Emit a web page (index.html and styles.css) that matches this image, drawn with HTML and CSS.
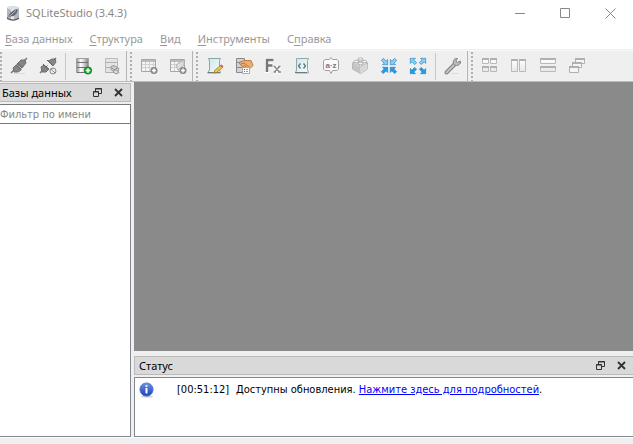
FILE: index.html
```html
<!DOCTYPE html>
<html lang="ru">
<head>
<meta charset="utf-8">
<title>SQLiteStudio (3.4.3)</title>
<link rel="stylesheet" href="styles.css">
</head>
<body>
<svg class="defs" aria-hidden="true">
  <defs>
    <linearGradient id="metal" x1="0" x2="1" y1="0" y2="0"><stop offset="0" stop-color="#8c8c8c"/><stop offset=".35" stop-color="#fff"/><stop offset=".6" stop-color="#d4d5e2"/><stop offset="1" stop-color="#808080"/></linearGradient>
    <linearGradient id="paper" x1="0" x2="1" y1="0" y2="1"><stop offset="0" stop-color="#cfe6e8"/><stop offset="1" stop-color="#f6fcfc"/></linearGradient>
    <linearGradient id="pane" x1="0" x2="0" y1="0" y2="1"><stop offset="0" stop-color="#fff"/><stop offset="1" stop-color="#e6e6e6"/></linearGradient>
    <linearGradient id="info" x1="0" x2="0" y1="0" y2="1"><stop offset="0" stop-color="#6f93e8"/><stop offset="1" stop-color="#1a3fb4"/></linearGradient>
    <symbol id="arrow" viewBox="0 0 8 8"><path d="M7.300 7.300V2L5.600 3.700 2.800.9.900 2.800 3.700 5.600 2 7.300Z" stroke="#2183bf" stroke-width=".7"/></symbol>
    <symbol id="restore" viewBox="0 0 9 9"><path d="M2.500 3V.5h6v5H6M2 1h7M.5 3.500h5v5h-5zM0 4h6" fill="none" stroke="#333"/></symbol>
    <symbol id="close" viewBox="0 0 9 9"><path d="M1 1l7 7M8 1L1 8" fill="none" stroke="#333" stroke-width="1.800"/></symbol>
  </defs>
</svg>
<div class="window">
  <header class="titlebar">
    <svg class="app-icon" viewBox="0 0 14 16"><path d="M1 3v10q6 4.500 12 0V3Q7-1 1 3Z" fill="#b4b6be"/><path d="M5 3h3v12H5z" fill="#e6e8ef"/><ellipse cx="7" cy="2.800" rx="6" ry="1.800" fill="#dcdfe8"/><path d="M1 12.500q6 4 12 0v1.500q-6 3.500-12 0z" fill="#555"/><path d="M1 13C4 9 4 6 11.500 4c.5 4-3 7.500-7 7.500z" fill="#626670"/><path d="M2 12.500L10 5.500" stroke="#ddd" stroke-width=".7"/></svg>
    <h1 class="app-name">SQLiteStudio (3.4.3)</h1>
    <div class="window-buttons">
      <button class="window-button" aria-label="Свернуть"><svg viewBox="0 0 11 11"><path d="M0 5.500h10"/></svg></button>
      <button class="window-button" aria-label="Развернуть"><svg viewBox="0 0 11 11"><path d="M.5.5h9v9h-9z"/></svg></button>
      <button class="window-button" aria-label="Закрыть"><svg viewBox="0 0 11 11"><path d="M.5.5l10 10M10.500.5l-10 10"/></svg></button>
    </div>
  </header>
  <nav class="menubar">
    <button class="menu"><u>Б</u>аза данных</button>
    <button class="menu"><u>С</u>труктура</button>
    <button class="menu"><u>В</u>ид</button>
    <button class="menu"><u>И</u>нструменты</button>
    <button class="menu">С<u>п</u>равка</button>
  </nav>
  <div class="toolbars">
    <div class="toolbar toolbar-first">
      <button class="tool" aria-label="Подключить"><svg viewBox="0 0 20 20"><path d="M4 17.500h12" stroke="#ddd"/><path d="M2 17l4-4M14 6l4-4" stroke="#777" stroke-width="1.500"/><path d="M4 12l3-3 5 5-3 2-4 0zM8 8l4-4 4 0 1 3-4 5z" fill="#858585" stroke="#707070"/><path d="M7 8.500l5.500 5M8.500 7l5 5" stroke="#606060"/></svg></button>
      <button class="tool" aria-label="Отключить"><svg viewBox="0 0 20 20"><path d="M2 17l3-3M15 5l3-3" stroke="#777" stroke-width="1.500"/><path d="M3 11l3-2 5 4-3 3-4 0zM10 5l4-2 3 0 1 3-3 4z" fill="#858585" stroke="#707070"/><path d="M5 8l6 6M9 4l6 6M8 11l1.500-1.500" stroke="#606060"/><circle cx="15" cy="15" r="3" fill="#eee" stroke="#888"/><path d="M13 13l4 4" stroke="#888"/></svg></button>
      <span class="separator"></span>
      <button class="tool" aria-label="Добавить базу данных"><svg viewBox="0 0 20 20"><path d="M3.500 2.500h12v14h-12z" fill="url(#metal)" stroke="#a0a0a0"/><path d="M4 6.500h11M4 11.500h11M4 16.500h11" stroke="#707070"/><circle cx="15" cy="14.500" r="3.600" fill="#16b52d" stroke="#078316"/><path d="M12.800 14.500h4.400M15 12.300v4.400" stroke="#fff" stroke-width="1.500"/></svg></button>
      <button class="tool" aria-label="Правка базы данных"><svg viewBox="0 0 20 20"><path d="M3.500 2.500h12v14h-12z" fill="#e4e4e4" stroke="#bababa"/><path d="M4 6.500h11M4 11.500h11M4 16.500h11" stroke="#b0b0b0"/><path d="M9 10.500l3-1 5 3-1 3-3 1-4-3z" fill="#ccc" stroke="#999"/><path d="M9.500 12l3 1.500 3-1.500M11 15.500l3-2 3 3-3 1.500z" fill="#ddd" stroke="#909090"/></svg></button>
    </div>
    <div class="toolbar">
      <button class="tool" aria-label="Создать таблицу"><svg viewBox="0 0 20 20"><path d="M2.500 3.500h14v12h-14z" fill="#f4f4f4" stroke="#a6a6a6"/><path d="M3 5h13" stroke="#bbb" stroke-width="2"/><path d="M3 8.500h13M3 11.500h13M6.500 6v9M10.500 6v9M14.500 6v9" stroke="#d0d0d0"/><circle cx="15" cy="14.500" r="3.500" fill="#888"/><path d="M13 14.500h4M15 12.500v4" stroke="#fff" stroke-width="1.500"/></svg></button>
      <button class="tool" aria-label="Создать представление"><svg viewBox="0 0 20 20"><path d="M2.500 3.500h14v12h-14z" fill="#f4f4f4" stroke="#a6a6a6"/><path d="M3 5h13" stroke="#bbb" stroke-width="2"/><path d="M3 8.500h13M3 11.500h13M6.500 6v9M10.500 6v9" stroke="#d0d0d0"/><path d="M8 9l8-5v5l-6 5z" fill="#ddd" stroke="#b4b4b4"/><circle cx="15" cy="14.500" r="3.500" fill="#888"/><path d="M13 14.500h4M15 12.500v4" stroke="#fff" stroke-width="1.500"/></svg></button>
    </div>
    <div class="toolbar">
      <button class="tool" aria-label="Редактор SQL"><svg viewBox="0 0 20 20"><path d="M3.500 2.500h12l-1 2v9l1 3.500h-13l2-3v-9z" fill="url(#paper)" stroke="#8ba6a9"/><path d="M3 16.500h12" stroke="#777"/><path d="M9.500 14.500l6-5 2 2-6 5-2.500.5z" fill="#f0ca3d" stroke="#8e773a" stroke-width=".8"/><path d="M15 9.500l1.500-1 2 2-1.500 1z" fill="#e05050"/></svg></button>
      <button class="tool" aria-label="История"><svg viewBox="0 0 20 20"><path d="M2.500 2.500h8v14h-8zM3 6.500h7M3 11.500h7" fill="#d1d3d8" stroke="#868a90"/><path d="M5 6.500l5-2 7 0 2 5-3 3-5-1-4-2z" fill="#e9af72" stroke="#b87c43"/><path d="M7 8l3-1 5 4M10 9l3 3" fill="none" stroke="#bf7a38"/><path d="M8.500 11.500h7v6h-7z" fill="#fff" stroke="#aaa"/><path d="M10 13.500h1" stroke="#d33"/><path d="M10 15.500h1" stroke="#3a3"/><path d="M12 13.500h2M12 15.500h2" stroke="#999"/></svg></button>
      <button class="tool" aria-label="Функции"><svg viewBox="0 0 20 20"><path d="M4 17V4h7M4 9.500h6M11 10l6 7M17 10l-6 7" fill="none" stroke="#fff" stroke-width="4"/><path d="M4 16V4h6.500M4 9.500h5.500" fill="none" stroke="#777" stroke-width="2.500"/><path d="M11.500 10.500l5 5.500M16.500 10.500l-5 5.500M10.500 10.500h2M15 10.500h2.500M10.500 16h2.500M15 16h3" stroke="#888" stroke-width="1.600"/></svg></button>
      <button class="tool" aria-label="Фрагменты кода"><svg viewBox="0 0 20 20"><path d="M4.500 2.500h12l-1 2v9l1 3.500h-13l1-3z" fill="url(#paper)" stroke="#8fa8aa"/><path d="M3 16.500h12" stroke="#687d7f"/><path d="M8.500 7.500L6.500 10l2 2.500M11.500 7.500l2 2.500-2 2.500" fill="none" stroke="#607378" stroke-width="1.300"/></svg></button>
      <button class="tool" aria-label="Сравнения"><svg viewBox="0 0 20 20"><path d="M4 3.500h4.500L10 1.500l1.500 2H16l1.500 1.500v8L16 14.500h-4.500l-1.500 3-1.500-3H4L2.500 13V5z" fill="#fafafa" stroke="#a0a0a0"/><text x="10" y="11.500" class="glyph">a·z</text></svg></button>
      <button class="tool" aria-label="Расширения"><svg viewBox="0 0 20 20"><path d="M2.500 7l8-3 7 3v6l-7 4.500-8-4.500z" fill="#e6e6e6" stroke="#aaa"/><path d="M2.500 7.500l8 3.500v6.500l-8-4.500z" fill="#c4c4c4"/><path d="M10.500 11l7-3.500V13l-7 4.500z" fill="#d8d8d8"/><g fill="#f6f6f6" stroke="#a6a6a6" stroke-width=".8"><path d="M8.200 3v2q2.300 1.500 4.600 0V3"/><ellipse cx="10.500" cy="3" rx="2.300" ry="1.200"/><path d="M4 5.500v2q2 1.500 4.400 0v-2"/><ellipse cx="6.200" cy="5.500" rx="2.200" ry="1.200"/><path d="M12.200 5.500v2q2 1.500 4.400 0v-2"/><ellipse cx="14.400" cy="5.500" rx="2.200" ry="1.200"/><path d="M8.200 7.500v2q2.300 1.500 4.600 0v-2"/><ellipse cx="10.500" cy="7.500" rx="2.300" ry="1.200"/></g></svg></button>
      <button class="tool" aria-label="Свернуть окна"><svg viewBox="0 0 20 20"><g fill="#8bcff5"><use href="#arrow" x="1.500" y="1.500" width="8" height="8"/><use href="#arrow" x="1.500" y="1.500" width="8" height="8" transform="rotate(90 10 10)"/></g><g fill="#2a9be2"><use href="#arrow" x="1.500" y="1.500" width="8" height="8" transform="rotate(180 10 10)"/><use href="#arrow" x="1.500" y="1.500" width="8" height="8" transform="rotate(270 10 10)"/></g></svg></button>
      <button class="tool" aria-label="Развернуть окна"><svg viewBox="0 0 20 20"><g fill="#2a9be2"><use href="#arrow" x="10.500" y="10.500" width="8" height="8"/><use href="#arrow" x="10.500" y="10.500" width="8" height="8" transform="rotate(90 10 10)"/></g><g fill="#8bcff5"><use href="#arrow" x="10.500" y="10.500" width="8" height="8" transform="rotate(180 10 10)"/><use href="#arrow" x="10.500" y="10.500" width="8" height="8" transform="rotate(270 10 10)"/></g></svg></button>
      <span class="separator"></span>
      <button class="tool" aria-label="Настройки"><svg viewBox="0 0 20 20"><path d="M8 17.500h8" stroke="#ddd"/><path d="M3.500 16.500L12 8" stroke="#808080" stroke-width="4" stroke-linecap="round"/><path d="M3.500 16.500L12 8" stroke="#c2c2c2" stroke-width="2" stroke-linecap="round"/><path d="M14.500 2.500c-3-.5-5 2-4 5 1 2.500 5 3 7-.5l-.2-2-3 1.500-1.500-1.500z" fill="#bbb" stroke="#808080"/></svg></button>
    </div>
    <div class="toolbar toolbar-last">
      <button class="tool" aria-label="Плитка"><svg viewBox="0 0 20 20"><path d="M2.500 2.500h6v5h-6zM10.500 2.500h6v5h-6zM2.500 10.500h6v5h-6zM10.500 10.500h6v5h-6z" fill="url(#pane)" stroke="#bababa"/><path d="M2 3h7M10 3h7M2 11h7M10 11h7" stroke="#b0b0b0" stroke-width="2"/></svg></button>
      <button class="tool" aria-label="Плитка по вертикали"><svg viewBox="0 0 20 20"><path d="M2.500 3.500h6v12h-6zM10.500 3.500h6v12h-6z" fill="url(#pane)" stroke="#bababa"/><path d="M2 4h7M10 4h7" stroke="#b0b0b0" stroke-width="2"/></svg></button>
      <button class="tool" aria-label="Плитка по горизонтали"><svg viewBox="0 0 20 20"><path d="M2.500 2.500h15v5h-15zM2.500 10.500h15v5h-15z" fill="url(#pane)" stroke="#bababa"/><path d="M2 3h16M2 11h16" stroke="#b0b0b0" stroke-width="2"/></svg></button>
      <button class="tool" aria-label="Каскад"><svg viewBox="0 0 20 20"><g fill="#f5f5f5" stroke="#b0b0b0"><path d="M8.500 2.500h9v5h-9z"/><path d="M8 3h10" stroke-width="2"/><path d="M5.500 6.500h9v5h-9z"/><path d="M5 7h10" stroke-width="2"/><path d="M2.500 10.500h9v6h-9z"/><path d="M2 11h10" stroke-width="2"/></g></svg></button>
    </div>
  </div>
  <main class="workspace">
    <section class="dock databases">
      <header class="dock-title">
        <h2>Базы данных</h2>
        <button class="dock-button" aria-label="Открепить"><svg viewBox="0 0 9 9"><use href="#restore"/></svg></button>
        <button class="dock-button" aria-label="Закрыть"><svg viewBox="0 0 9 9"><use href="#close"/></svg></button>
      </header>
      <input class="filter" type="text" placeholder="Фильтр по имени" aria-label="Фильтр по имени">
      <div class="tree"></div>
    </section>
    <div class="content">
      <div class="mdi"></div>
      <section class="dock status">
        <header class="dock-title">
          <h2>Статус</h2>
          <button class="dock-button" aria-label="Открепить"><svg viewBox="0 0 9 9"><use href="#restore"/></svg></button>
          <button class="dock-button" aria-label="Закрыть"><svg viewBox="0 0 9 9"><use href="#close"/></svg></button>
        </header>
        <div class="log">
          <svg class="info-icon" viewBox="0 0 16 16"><ellipse cx="8" cy="14.500" rx="6" ry="1.200" fill="#ccc"/><circle cx="7.500" cy="7.500" r="6.600" fill="url(#info)" stroke="#4a6cc4" stroke-width=".8"/><circle cx="7.500" cy="4" r="1.100" fill="#fff"/><path d="M7.500 6v5.500" stroke="#fff" stroke-width="2"/></svg>
          <time>[00:51:12]</time>
          <p class="message">Доступны обновления. <a href="#updates">Нажмите здесь для подробностей</a>.</p>
        </div>
      </section>
    </div>
  </main>
  <footer class="statusbar"></footer>
</div>
</body>
</html>
```
FILE: styles.css
```css
* {
  box-sizing: border-box;
}

body {
  margin: 0;
  background: #efefef;
  color: #000;
  font: 11px/16px "Noto Sans", "Open Sans", sans-serif;
}

button {
  padding: 0;
  border: 0;
  background: none;
  color: inherit;
  font: inherit;
}

h1,
h2,
p {
  margin: 0;
  font: inherit;
}

svg {
  display: block;
  flex: none;
  fill: none;
}

symbol,
symbol path {
  fill: inherit;
}

.defs {
  position: absolute;
  width: 0;
  height: 0;
}

.window {
  display: flex;
  flex-direction: column;
  min-height: 100vh;
}

.titlebar {
  display: flex;
  align-items: center;
  height: 26px;
  padding-left: 6px;
  background: #fff;
  color: #888;
}

.app-icon {
  width: 14px;
  height: 16px;
}

.app-name {
  flex: 1;
  padding-left: 6px;
}

.window-buttons {
  display: flex;
}

.window-button {
  display: grid;
  place-items: center;
  width: 45px;
  height: 24px;
}

.window-button svg {
  width: 11px;
  height: 11px;
  stroke: #888;
}

.menubar {
  display: flex;
  gap: 17px;
  height: 24px;
  padding: 5px 5px 2px;
  border-bottom: 1px solid #efefef;
  background: #fff;
  color: #999;
}

.menu u {
  text-underline-offset: 2px;
}

.toolbars {
  display: flex;
  height: 32px;
  border-top: 1px solid #f8f8f8;
  border-bottom: 1px solid #bcbcbc;
}

.toolbar {
  display: flex;
  align-items: center;
  gap: 1px;
  padding-left: 8px;
  border-right: 1px solid #b4b4b4;
  background: radial-gradient(circle, #b0b0b0 1px, transparent 1px) 2px 0 / 4px 4px repeat-y;
}

.toolbar-first {
  padding-left: 5px;
  background-position-x: -1px;
}

.toolbar-last {
  flex: 1;
  border-right: 0;
}

.tool {
  display: grid;
  place-items: center;
  width: 28px;
  height: 28px;
}

.tool svg {
  width: 20px;
  height: 20px;
}

.glyph {
  fill: #777;
  font: bold 8px "Liberation Sans", sans-serif;
  text-anchor: middle;
}

.separator {
  width: 5px;
  height: 27px;
  background: linear-gradient(#c8c8c8, #c8c8c8) center / 1px 100% no-repeat;
}

.workspace {
  display: grid;
  grid-template-columns: 131px 1fr;
  gap: 3px;
  flex: 1;
}

.dock,
.content {
  display: flex;
  flex-direction: column;
  min-width: 0;
}

.databases {
  padding-top: 1px;
}

.dock-title {
  display: flex;
  align-items: center;
  gap: 12px;
  height: 19px;
  padding: 0 7px 0 4px;
  border: 1px solid #bababa;
  background: #d9d9d9;
}

.databases .dock-title {
  padding-left: 2px;
  border-left: 0;
}

.status .dock-title {
  border-right: 0;
}

.dock-title h2 {
  flex: 1;
}

.dock-button svg {
  width: 9px;
  height: 9px;
}

.filter {
  width: 100%;
  height: 20px;
  margin-top: 2px;
  padding: 0;
  border: 1px solid #777;
  border-left: 0;
  background: #fff;
  font: 11px/16px "DejaVu Sans Condensed", "DejaVu Sans", sans-serif;
}

.filter::placeholder {
  color: #888;
}

.tree {
  flex: 1;
  border: 1px solid #828790;
  border-width: 0 1px 1px 0;
  background: #fff;
}

.mdi {
  flex: 1;
  background: #8a8a8a;
}

.status {
  gap: 2px;
  padding-top: 5px;
}

.log {
  display: flex;
  align-items: flex-start;
  height: 60px;
  padding: 4px;
  border: 1px solid #828790;
  border-right: 0;
  background: #fff;
  font: 11px/16px "DejaVu Sans Condensed", "DejaVu Sans", sans-serif;
}

.info-icon {
  width: 16px;
  height: 16px;
}

.log time {
  width: 81px;
  padding-left: 22px;
}

.log a {
  color: #00f;
}

.statusbar {
  height: 7px;
  border-top: 1px solid #fff;
}
```
